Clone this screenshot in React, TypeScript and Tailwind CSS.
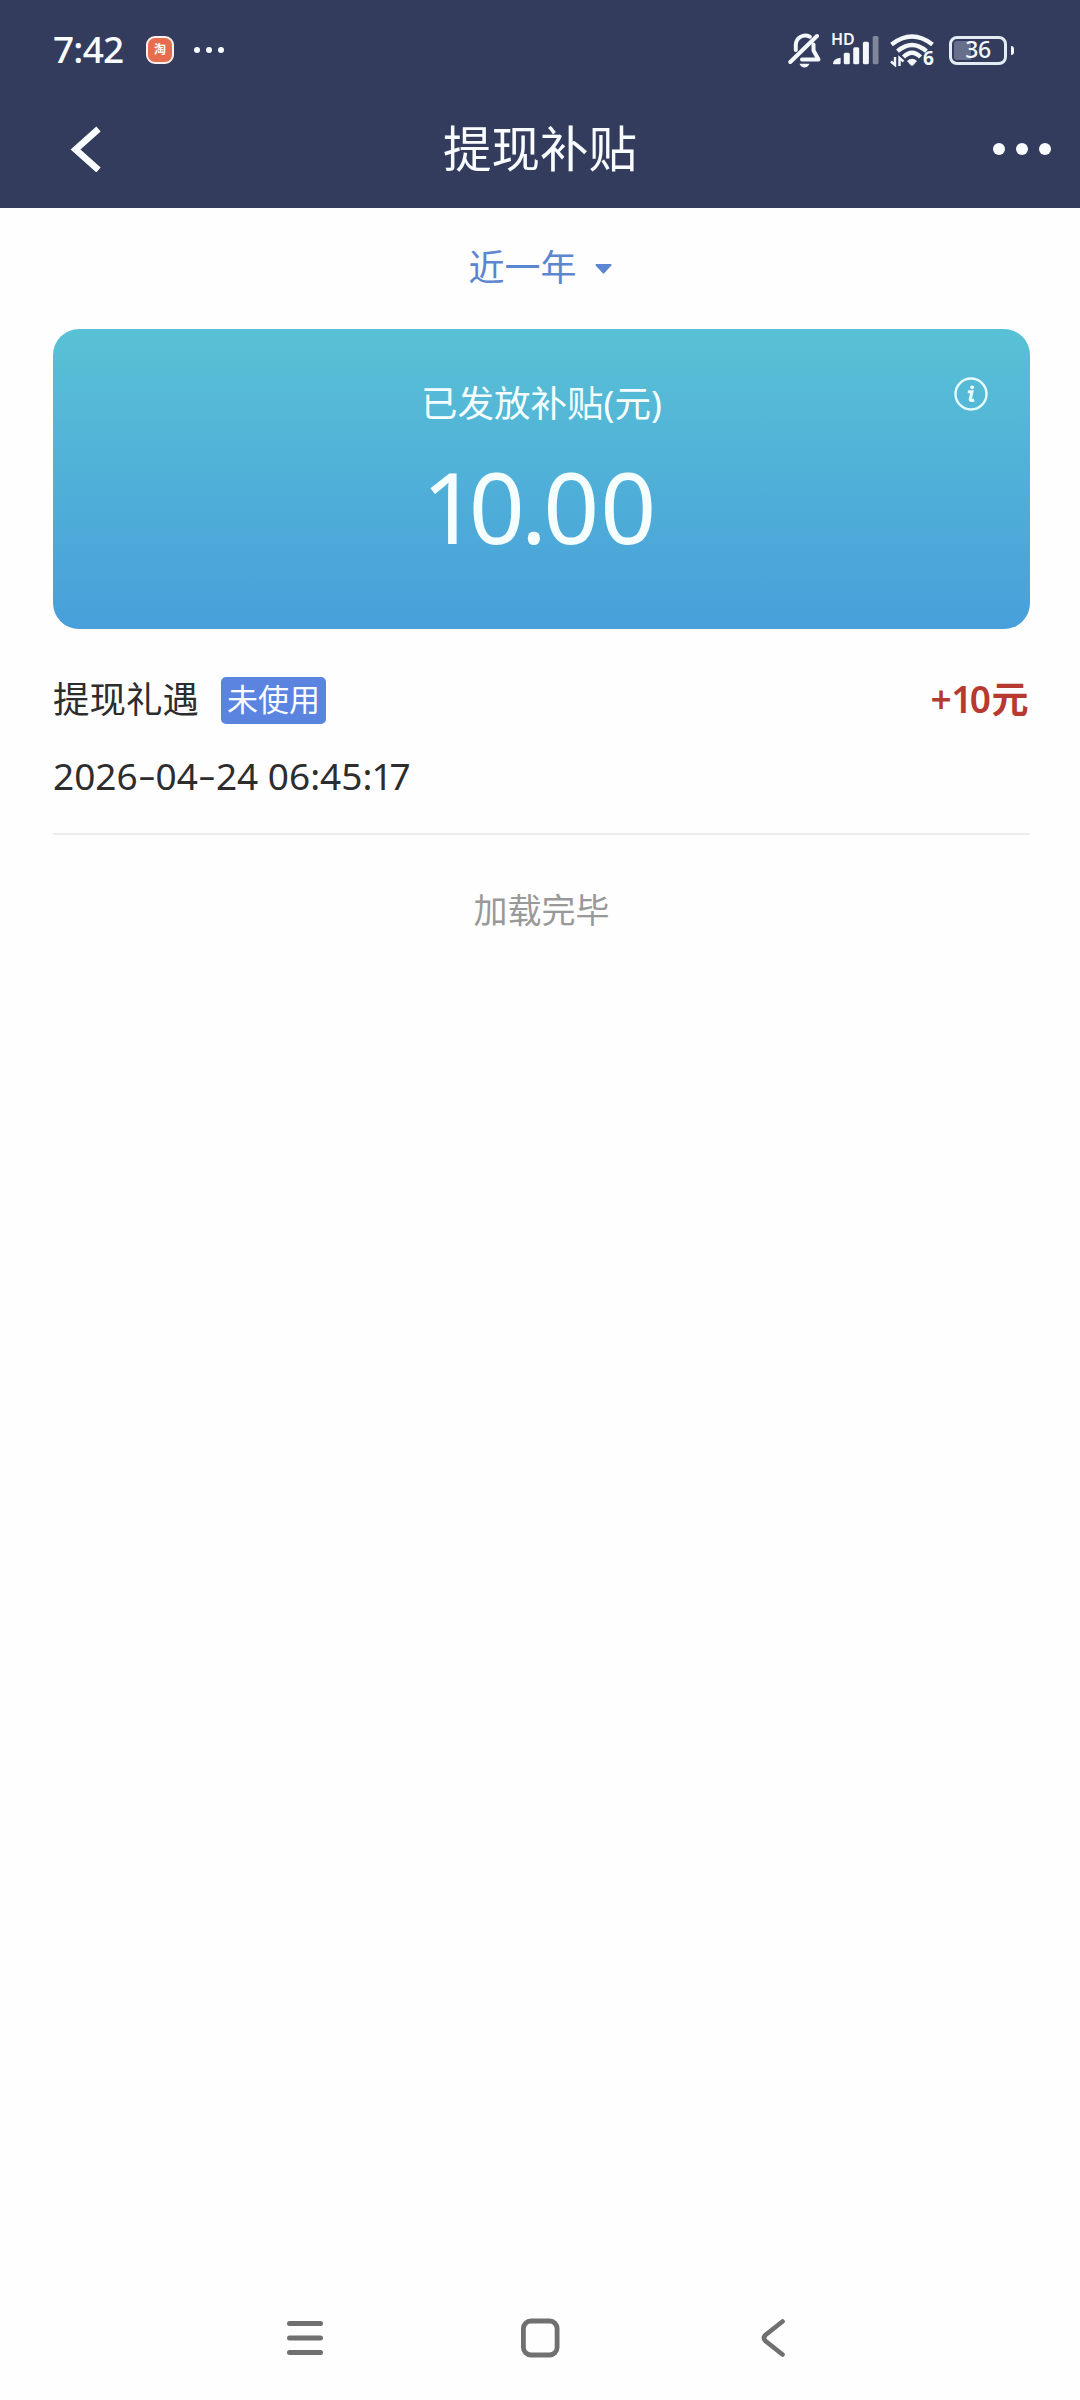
const records = [
    { id: 1, title: '提现礼遇', status: '未使用', date: '2026-04-24', time: '06:45:17', amount: '+10元' },
];

// Tightens the narrow "1" and widens hyphens so the numbers sit evenly
function Figures({ text }: { text: string }) {
    return (
        <>
            {text.split('').map((c, i) => {
                if (c === '-') return <span key={i} className="mx-[3px] inline-block origin-center -translate-y-[2px] scale-x-150">-</span>;
                if (c === '1') return <span key={i} className="-mr-[3px] -ml-px">1</span>;
                return <span key={i}>{c}</span>;
            })}
        </>
    );
}

function BellOffIcon() {
    return (
        <svg width="34" height="36" viewBox="0 0 34 36" fill="none" stroke="#f4f8fb" strokeWidth="4" strokeLinecap="round" strokeLinejoin="round">
            <path d="M7.800 18v-5a9.500 9.500 0 0 1 14-8.300" />
            <path d="M25.500 12.500v6l5 9H14" />
            <path d="M2.300 30L29 4" />
            <path d="M11.500 31.800h10q-1.500 3.700-5 3.700t-5-3.700z" fill="#f4f8fb" stroke="none" />
        </svg>
    );
}

function SignalIcon() {
    return (
        <div className="relative h-[34px] w-[46px]">
            <span className="absolute -top-px -left-[2px] text-[16px] leading-[14px] font-semibold text-[#f4f8fb]">HD</span>
            <svg className="absolute inset-0" width="46" height="34" viewBox="0 0 46 34" fill="#f4f8fb">
                <path d="M0 30.500q0-4.500 7.600-5.800v5.300q0 1.300-1.300 1.300h-5.300q-1 0-1-.8z" />
                <rect x="10.800" y="19.700" width="6" height="11.600" rx="1.500" />
                <rect x="20.200" y="14.300" width="6" height="17" rx="1.500" />
                <rect x="29.900" y="8.700" width="6" height="22.600" rx="1.500" />
                <rect x="39.700" y="3" width="5.800" height="28.300" rx="1.500" opacity="0.4" />
            </svg>
        </div>
    );
}

function WifiIcon() {
    return (
        <div className="relative h-[34px] w-[45px]">
            <svg width="45" height="34" viewBox="0 0 45 34" fill="none" stroke="#f4f8fb" strokeWidth="4.300">
                <path d="M1.500 11.500Q22 -4.500 42.500 11.500" />
                <path d="M7.500 18.200Q22 5.800 36.500 18.200" />
                <path d="M13.500 24Q22 15.500 30.500 24" />
                <path d="M17 28q5-4.500 10 0l-3.500 4q-1.500 1.500-3 0z" fill="#f4f8fb" stroke="none" />
                <path d="M5 24v8L1 28.500M9.500 33v-8L13.500 28.500" strokeWidth="2.400" />
            </svg>
            <span className="absolute top-[16px] left-[33px] text-[19px] leading-[19px] font-bold text-[#f4f8fb]">6</span>
        </div>
    );
}

function Battery() {
    return (
        <div className="flex items-center gap-1">
            <div className="relative flex h-[29px] w-[58px] items-center justify-center rounded-[8px] border-[3px] border-[#e3ebf3]">
                <div className="absolute inset-y-[2px] left-[2px] w-[17px] rounded-l-[3px] bg-[#686f8c]" />
                <span className="relative -mt-px text-[23px] leading-[23px] font-medium tracking-[-0.5px] text-[#f4f8fb]">36</span>
            </div>
            <div className="h-[9px] w-[3px] rounded-r-full bg-[#f4f8fb]" />
        </div>
    );
}

export default function App() {
    return (
        <div className="flex h-[2400px] w-[1080px] flex-col bg-[#fefefe] font-['Noto_Sans','Noto_Sans_CJK_SC',sans-serif] text-[#2d2d2d]">
            <header className="h-[208px] bg-[#343c5d] text-[#fafdff]">
                {/* Status bar */}
                <div className="flex h-[100px] items-center pr-[66px] pl-[53px]">
                    <span className="-mt-[3px] w-[93px] text-[37px] leading-none font-medium tracking-[-0.8px]">7:42</span>
                    <div className="flex h-[28px] w-[28px] items-center justify-center rounded-[9px] border-2 border-[#fff0ed] bg-[#e66e4e]">
                        <span className="text-[12px] leading-none font-bold">淘</span>
                    </div>
                    <div className="ml-5 flex gap-[6px]">
                        <i className="size-[6px] rounded-full bg-[#fafdff]" />
                        <i className="size-[6px] rounded-full bg-[#fafdff]" />
                        <i className="size-[6px] rounded-full bg-[#fafdff]" />
                    </div>
                    <div className="ml-auto flex items-center">
                        <BellOffIcon />
                        <div className="ml-[11px]"><SignalIcon /></div>
                        <div className="ml-[11px]"><WifiIcon /></div>
                        <div className="ml-[14px]"><Battery /></div>
                    </div>
                </div>

                {/* Title bar */}
                <div className="grid h-[97px] grid-cols-[1fr_auto_1fr] items-center pr-[29px] pl-[70px]">
                    <svg width="32" height="46" viewBox="0 0 32 46" fill="none" stroke="#fafdff" strokeWidth="6.500">
                        <path d="M28.500 3L5.500 23.500L28.500 44" />
                    </svg>
                    <h1 className="-ml-[41px] text-[48.500px] leading-none font-normal">提现补贴</h1>
                    <div className="flex gap-[11px] justify-self-end">
                        <i className="size-3 rounded-full bg-[#fafdff]" />
                        <i className="size-3 rounded-full bg-[#fafdff]" />
                        <i className="size-3 rounded-full bg-[#fafdff]" />
                    </div>
                </div>
            </header>

            <main className="flex-1 pr-[50px] pl-[53px]">
                {/* Period filter */}
                <button className="flex h-[121px] w-full items-center justify-center gap-[18px] pr-[3px] text-[36px] leading-none text-[#5c86cf]">
                    <span className="-mt-[2px]">近一年</span>
                    <svg width="17" height="10" viewBox="0 0 17 10" fill="#5c86d4">
                        <path d="M1 0h15q1 .6 .3 1.500L9.500 9q-1 1-2 0L.7 1.500Q0 .6 1 0z" />
                    </svg>
                </button>

                {/* Summary card */}
                <section className="relative flex h-[300px] flex-col items-center rounded-[26px] bg-linear-to-b from-[#59c1d5] to-[#489fda] text-[#f6ffff]">
                    <p className="mt-[56px] text-[36.500px] leading-[37px]">已发放补贴(元)</p>
                    <p className="mt-[25px] -ml-[4px] text-[98px] leading-[118px]">
                        <span className="tracking-[-9px]">1</span>
                        <span className="tracking-[-4px]">0.</span>
                        <span className="tracking-[1px]">00</span>
                    </p>
                    <svg className="absolute top-[48px] right-[42px]" width="34" height="34" viewBox="0 0 34 34" fill="none" stroke="#e6fcff" strokeWidth="2.400">
                        <circle cx="17" cy="17" r="15.500" />
                        <circle cx="18.200" cy="10.300" r="1.900" fill="#f6ffff" stroke="none" />
                        <path d="M13.800 14.800h4.200l-1.800 7.500q-.2 1.900 4 .7" strokeWidth="3" />
                    </svg>
                </section>

                {/* Records */}
                {records.map((r) => (
                    <div key={r.id} className="h-[206px] border-b-2 border-[#ededed] pt-[48px]">
                        <div className="flex h-[47px] items-center justify-between">
                            <div className="flex items-center">
                                <span className="-mt-[2px] text-[36.500px] leading-none">{r.title}</span>
                                <span className="ml-[22px] flex h-[47px] w-[105px] items-center justify-center rounded-[5px] bg-[#5b84e0] pb-[2px] text-[31px] leading-none text-[#fafdff]">{r.status}</span>
                            </div>
                            <span className="-mt-[4px] mr-px text-[37px] leading-none font-semibold tracking-[0.500px] text-[#b73a30]"><Figures text={r.amount} /></span>
                        </div>
                        <p className="mt-[27px] text-[37px] leading-[50px]"><Figures text={`${r.date} ${r.time}`} /></p>
                    </div>
                ))}

                <p className="mt-[57px] text-center text-[34px] leading-[36px] text-[#999]">加载完毕</p>
            </main>

            {/* System navigation */}
            <nav className="flex h-[125px] items-center pl-[285px]">
                <svg width="40" height="44" viewBox="0 0 40 44" fill="none" stroke="#707070" strokeWidth="5" strokeLinecap="round">
                    <path d="M4.500 7.500h31M4.500 22h31M4.500 36.500h31" />
                </svg>
                <svg className="ml-[194px]" width="42" height="44" viewBox="0 0 42 44" fill="none" stroke="#707070" strokeWidth="4.800">
                    <rect x="4.400" y="5" width="33.700" height="34" rx="7.500" />
                </svg>
                <svg className="ml-[199px]" width="28" height="44" viewBox="0 0 28 44" fill="none" stroke="#707070" strokeWidth="4.600" strokeLinecap="round">
                    <path d="M22.500 5.500L5.500 19Q2.500 22 5.500 25L22.500 38.500" />
                </svg>
            </nav>
        </div>
    );
}
